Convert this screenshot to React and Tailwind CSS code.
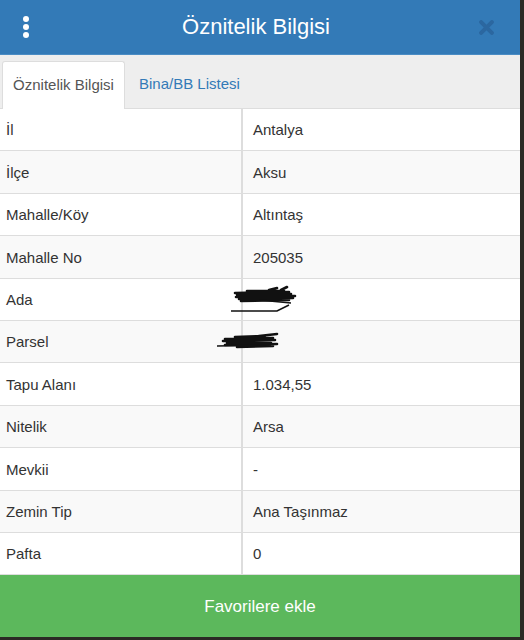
import React from 'react';

const rows = [
    ['İl', 'Antalya'],
    ['İlçe', 'Aksu'],
    ['Mahalle/Köy', 'Altıntaş'],
    ['Mahalle No', '205035'],
    ['Ada', 'scribble1'],
    ['Parsel', 'scribble2'],
    ['Tapu Alanı', '1.034,55'],
    ['Nitelik', 'Arsa'],
    ['Mevkii', '-'],
    ['Zemin Tip', 'Ana Taşınmaz'],
    ['Pafta', '0'],
];

const ScribbleAda = () => (
    <svg width="90" height="30" viewBox="0 0 90 30" className="absolute left-[-14px] top-[6px]">
        <path d="M6 8 L60 7 M8 10 L62 9 M7 12 L58 12 M10 14 L64 13 M12 16 L60 15 M14 9 L66 11 M18 6 L55 6 M40 5 L48 3 M52 5 L58 2"
            stroke="#111" strokeWidth="2.6" fill="none" strokeLinecap="round" />
        <path d="M30 15 L62 18" stroke="#111" strokeWidth="1.5" fill="none" />
        <path d="M2 26 L48 26 L60 20" stroke="#111" strokeWidth="1.6" fill="none" />
    </svg>
);

const ScribbleParsel = () => (
    <svg width="90" height="30" viewBox="0 0 90 30" className="absolute left-[-28px] top-[10px]">
        <path d="M10 8 L58 7 M8 10 L60 9 M12 12 L56 12 M10 14 L62 13 M20 6 L50 5 M44 5 L62 3 M22 16 L58 15"
            stroke="#111" strokeWidth="2.6" fill="none" strokeLinecap="round" />
        <path d="M2 15 L56 14" stroke="#111" strokeWidth="1.5" fill="none" />
    </svg>
);

const App = () => {
    return (
        <div className="w-[524px] h-[640px] bg-[#2b2a25] flex flex-col font-['Liberation_Sans',Arial,sans-serif]">
            <div className="w-[520px] flex flex-col bg-white">
                {/* header */}
                <div className="h-[55px] bg-[#337ab7] flex items-center justify-between px-[22px] border-b border-[#4a8cc4]">
                    <div className="flex flex-col gap-[2px] pl-[1px]">
                        <span className="w-[6px] h-[6px] rounded-full bg-white" />
                        <span className="w-[6px] h-[6px] rounded-full bg-white" />
                        <span className="w-[6px] h-[6px] rounded-full bg-white" />
                    </div>
                    <h1 className="text-white text-[22px] leading-none ml-[4px]">Öznitelik Bilgisi</h1>
                    <svg width="15" height="15" viewBox="0 0 14 14" className="mr-[4px]">
                        <path d="M2 2 L12 12 M12 2 L2 12" stroke="#2b67a0" strokeWidth="3.8" strokeLinecap="round" />
                    </svg>
                </div>

                {/* tabs */}
                <div className="h-[54px] bg-[#eeeeee] flex items-end pl-[2px] border-b border-[#dddddd]">
                    <div className="h-[48px] w-[123px] bg-white border border-b-0 border-[#dddddd] rounded-t-[3px] flex items-center justify-center text-[15px] text-[#555555] -mb-px">
                        Öznitelik Bilgisi
                    </div>
                    <div className="h-[48px] flex items-center px-[14px] text-[15px] text-[#337ab7]">
                        Bina/BB Listesi
                    </div>
                </div>

                {/* table */}
                <div className="flex flex-col">
                    {rows.map(([k, v], i) => (
                        <div
                            key={k}
                            className={`flex h-[42.4px] border-b border-[#dddddd] text-[15px] text-[#333333] ${i % 2 === 0 ? 'bg-white' : 'bg-[#f9f9f9]'}`}
                        >
                            <div className="w-[243px] pl-[6px] pt-[2px] flex items-center border-r-2 border-[#dddddd]">{k}</div>
                            <div className="flex-1 pl-[10px] pt-[2px] flex items-center relative">
                                {v === 'scribble1' ? <ScribbleAda /> : v === 'scribble2' ? <ScribbleParsel /> : v}
                            </div>
                        </div>
                    ))}
                </div>

                {/* button */}
                <button className="h-[62px] bg-[#5cb85c] text-white text-[17px] flex items-center justify-center">
                    Favorilere ekle
                </button>
            </div>
        </div>
    );
};

export default App;
